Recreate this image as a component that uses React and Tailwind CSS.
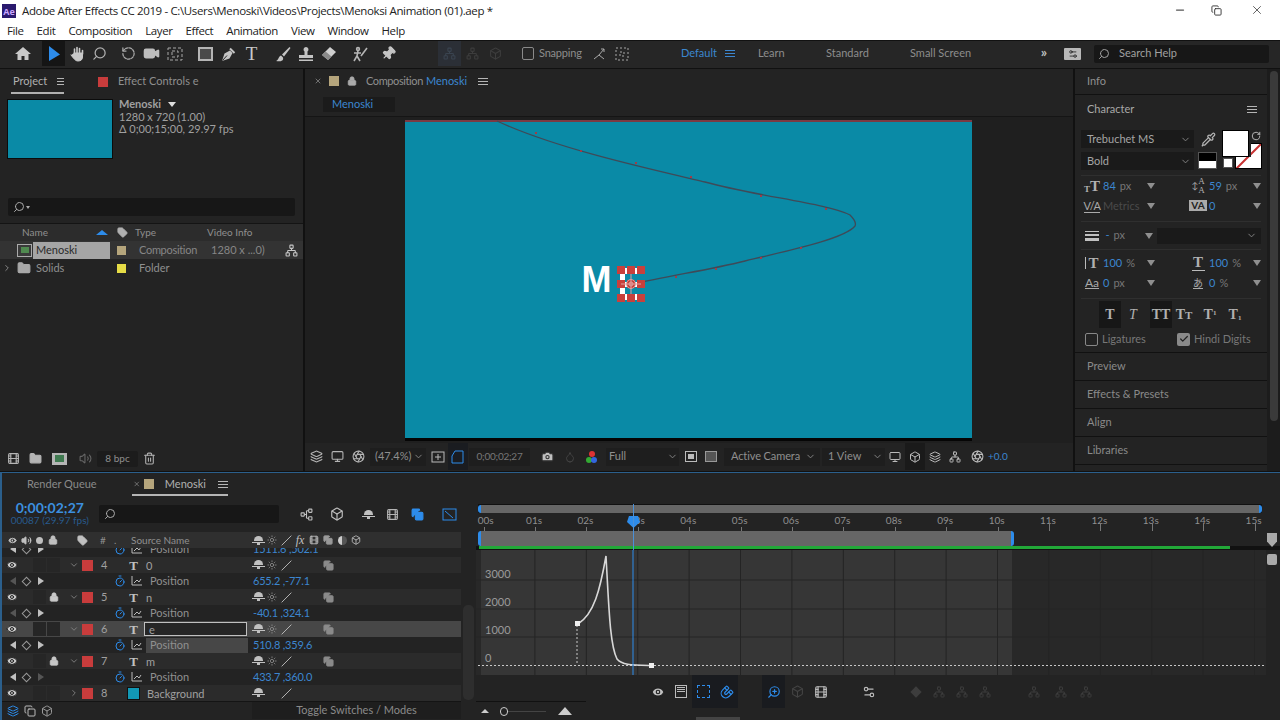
import React from "react";
import {
  Search, RotateCcw, Video, Pin, Eye, Volume2, Lock, Tag, Trash2,
  Folder, ChevronDown, ChevronRight, Monitor, Camera, Layers, Timer, Network, Check, X, Minus, Copy, Pipette, Settings2, Aperture, Box, Sun, Magnet, ZoomIn, Film, Slash, Droplet,
} from "lucide-react";

const Burger = ({ c = "bg-[#b5b5b5]" }) => (
  <span className="flex flex-col gap-[2px] w-[10px]">
    <span className={`h-px ${c}`} /><span className={`h-px ${c}`} /><span className={`h-px ${c}`} />
  </span>
);
const Slot = ({ w = "w-[23px]", children, className = "" }) => (
  <span className={`${w} h-full flex items-center justify-center shrink-0 ${className}`}>{children}</span>
);
const B = "#2d8ceb";
const Arrow = () => <span className="w-0 h-0 border-l-[4px] border-r-[4px] border-t-[6px] border-l-transparent border-r-transparent border-t-[#8f8f8f]" />;

const Serif = ({ children, className = "" }) => (
  <span className={`font-['Liberation_Serif',serif] font-bold text-[#b0b0b0] leading-none ${className}`}>{children}</span>
);

function Toolbar() {
  return (
    <div className="h-[28px] bg-[#262626] border-t border-[#111] flex items-center text-[11px] text-[#8d8d8d] shrink-0 pb-[2px]">
      <span className="w-[11px]" />
      <Slot>
        <svg width="16" height="15" viewBox="0 0 16 15" fill="#c8c8c8"><path d="M8 1 L16 8 H13.5 V14 H9.5 V10 H6.5 V14 H2.5 V8 H0 Z" /></svg>
      </Slot>
      <Slot className="ml-[8px] bg-[#151515]">
        <svg width="12" height="16" viewBox="0 0 12 16"><path d="M1 0 L12 8.5 L1 15 Z" fill={B} /></svg>
      </Slot>
      <Slot>
        <svg width="16" height="16" viewBox="0 0 16 16" fill="#c8c8c8" stroke="#c8c8c8" strokeLinecap="round" strokeWidth="1.6"><path d="M5.5 8 V3 M8 7 V1.5 M10.5 7 V2.5 M13.5 8 V4.5" fill="none" /><path d="M5 7 H13.5 V11 C13.5 13.5 12 15 9 15 C6.5 15 5 13 2 9" strokeWidth="1" /></svg>
      </Slot>
      <Slot><Search size={15} color="#b0b0b0" className="-scale-x-100" /></Slot>
      <Slot className="ml-[6px]"><RotateCcw size={15} color="#a8a8a8" strokeDasharray="4 2" /></Slot>
      <Slot><Video size={17} fill="#bdbdbd" color="#bdbdbd" /></Slot>
      <Slot>
        <svg width="16" height="14" viewBox="0 0 16 14" fill="none" stroke="#a8a8a8" strokeDasharray="3 2"><rect x="1" y="1" width="14" height="12" /><rect x="5" y="4" width="6" height="6" /></svg>
      </Slot>
      <Slot className="ml-[8px]"><span className="w-[15px] h-[14px] border-2 border-[#b5b5b5] bg-[#4a4a4a]" /></Slot>
      <Slot>
        <svg width="16" height="16" viewBox="0 0 16 16" fill="#c4c4c4"><path d="M1 15 L3.5 7.5 L9 4.5 L11.5 7 L8.5 12.5 Z" /><path d="M9 2.5 L13.5 7" stroke="#c4c4c4" strokeWidth="2" /><path d="M1.5 14.5 L6 9.5" stroke="#262626" /></svg>
      </Slot>
      <Slot><Serif className="text-[19px] font-normal text-[#c8c8c8]">T</Serif></Slot>
      <Slot className="ml-[8px]">
        <svg width="16" height="16" viewBox="0 0 16 16" fill="#c4c4c4"><path d="M14.5 1 L7 8.5 L9 10.5 L15.5 2 Z" /><path d="M6 9.5 C3 10.5 4 14 1 15 C5 16 9 15 8 11.5 Z" /></svg>
      </Slot>
      <Slot>
        <svg width="16" height="16" viewBox="0 0 16 16" fill="#c4c4c4"><path d="M8 1 A2.5 2.5 0 0 1 9.5 5.5 V9 H15 V12 H1 V9 H6.5 V5.5 A2.5 2.5 0 0 1 8 1 Z M1 13.5 H15 V15 H1 Z" /></svg>
      </Slot>
      <Slot>
        <svg width="17" height="15" viewBox="0 0 17 15" fill="#cfcfcf"><path d="M10 1 L16 6 L8 14 L2 9 Z" /><path d="M2 9 L5.5 5.5 L11.5 10.5 L8 14 Z" fill="#8a8a8a" /></svg>
      </Slot>
      <Slot className="ml-[8px]">
        <svg width="16" height="16" viewBox="0 0 16 16" fill="none" stroke="#b5b5b5" strokeWidth="1.6"><circle cx="6" cy="3" r="1.4" /><path d="M6 5 L5 10 L2 15 M5 10 L8 15 M2 7 L9 7 M15 2 L9 10" /></svg>
      </Slot>
      <Slot className="ml-[6px]"><Pin size={15} fill="#c4c4c4" color="#c4c4c4" className="rotate-45" /></Slot>
      <Slot className="ml-[38px] bg-[#2b2f36]"><Network size={13} color="#3a4450" /></Slot>
      <Slot><Network size={13} color="#3d3d3d" /></Slot>
      <Slot><Box size={13} color="#3d3d3d" /></Slot>
      <span className="ml-[15px] w-[12px] h-[13px] border border-[#8a8a8a] rounded-[2px] shrink-0" />
      <span className="ml-[5px] w-[43px] shrink-0 whitespace-nowrap tracking-[-0.2px]">Snapping</span>
      <Slot className="ml-[5px]">
        <svg width="14" height="14" viewBox="0 0 14 14" fill="none" stroke="#a8a8a8"><path d="M2 12 L7 8 L12 12 M7 8 L12 2 M9 2 L12 2 L12 5" /></svg>
      </Slot>
      <Slot>
        <svg width="14" height="14" viewBox="0 0 14 14" fill="none" stroke="#a8a8a8" strokeDasharray="2 2"><rect x="1" y="1" width="12" height="12" /><rect x="5" y="5" width="4" height="4" /></svg>
      </Slot>
      <span className="ml-[48px] w-[44px] text-[#3c86cf] shrink-0">Default</span>
      <span className="w-[33px] shrink-0"><Burger c="bg-[#3c86cf]" /></span>
      <span className="w-[68px] shrink-0">Learn</span>
      <span className="w-[84px] shrink-0">Standard</span>
      <span className="w-[120px] shrink-0">Small Screen</span>
      <Slot w="w-[28px]"><span className="text-[14px] text-[#c0c0c0] font-bold leading-none mb-[4px]">»</span></Slot>
      <Slot w="w-[29px]"><span className="w-[17px] h-[12px] bg-[#b8b8b8] rounded-[1px] flex items-center justify-center"><Settings2 size={10} color="#222" /></span></Slot>
      <span className="ml-[7px] w-[175px] h-[18px] bg-[#171717] rounded-[2px] flex items-center pl-[4px] text-[#a0a0a0] shrink-0">
        <Search size={12} color="#a0a0a0" className="-scale-x-100" />
        <span className="ml-[9px]">Search Help</span>
      </span>
    </div>
  );
}

function ProjectPanel() {
  return (
    <div className="w-[303px] bg-[#232323] flex flex-col text-[11px] text-[#8f8f8f] shrink-0">
      <div className="h-[25px] flex items-end shrink-0 pl-[11px]">
        <div className="w-[53px] h-[23px] border-b-2 border-[#b0b0b0] flex items-center pl-[2px] gap-[10px] text-[#b0b0b0]">
          <span>Project</span><Burger />
        </div>
        <span className="ml-[34px] mb-[7px] w-[10px] h-[10px] bg-[#c83c3c]" />
        <span className="ml-[10px] mb-[5px] whitespace-nowrap">Effect Controls e</span>
      </div>
      <div className="flex pl-[7px] mt-[5px] h-[62px]">
        <span className="w-[106px] h-[60px] bg-[#0a8aa6] border border-[#0c0c0c]" />
        <div className="ml-[6px] leading-[12.5px] mt-[-1px] text-[#a0a0a0]">
          <div className="font-bold flex items-center gap-[7px]">Menoski <span className="w-0 h-0 border-l-[4px] border-r-[4px] border-t-[5px] border-l-transparent border-r-transparent border-t-[#ddd]" /></div>
          <div>1280 x 720 (1.00)</div>
          <div>Δ 0;00;15;00, 29.97 fps</div>
        </div>
      </div>
      <div className="mx-[8px] mt-[37px] h-[18px] bg-[#171717] rounded-[2px] flex items-center pl-[5px] gap-[1px]">
        <Search size={12} color="#aaa" className="-scale-x-100" /><span className="w-0 h-0 border-l-[2px] border-r-[2px] border-t-[3px] border-l-transparent border-r-transparent border-t-[#aaa]" />
      </div>
      <div className="mt-[7px] h-[18px] bg-[#2c2c2c] border-t border-[#141414] flex items-center text-[10px] pl-[22px] relative">
        <span className="w-[74px]">Name</span>
        <span className="w-0 h-0 border-l-[6px] border-r-[6px] border-b-[5px] border-l-transparent border-r-transparent border-b-[#2d8ceb]" />
        <Tag size={11} fill="#b0b0b0" color="#b0b0b0" className="ml-[9px]" />
        <span className="ml-[7px] w-[72px]">Type</span>
        <span>Video Info</span>
      </div>
      <div className="h-[18px] bg-[#333] flex items-center relative">
        <span className="ml-[17px] w-[15px] h-[13px] border border-[#aaa] bg-[#3a3a3a] flex items-center justify-center"><span className="w-[8px] h-[6px] bg-[#508a50]" /></span>
        <span className="ml-[1px] w-[77px] h-[17px] bg-[#a5a5a5] flex items-center pl-[3px] text-[#2a2a2a]">Menoski</span>
        <span className="ml-[7px] w-[9px] h-[9px] bg-[#b5a57c]" />
        <span className="ml-[13px] w-[72px] text-[#868686] tracking-[-0.3px]">Composition</span>
        <span className="text-[#868686]">1280 x ...0)</span>
        <Network size={13} color="#c8c8c8" className="absolute right-[5px]" />
      </div>
      <div className="h-[18px] flex items-center">
        <ChevronRight size={10} color="#999" className="ml-[2px]" />
        <Folder size={14} fill="#a8a8a8" color="#a8a8a8" className="ml-[5px]" />
        <span className="ml-[2px] w-[77px] pl-[3px]">Solids</span>
        <span className="ml-[7px] w-[9px] h-[9px] bg-[#e6dc46]" />
        <span className="ml-[13px]">Folder</span>
      </div>
      <div className="mt-auto h-[19px] mb-[3px] flex items-center pl-[2px]">
        <Slot w="w-[22px]"><Film size={13} color="#b5b5b5" /></Slot>
        <Slot w="w-[22px]"><Folder size={13} fill="#b5b5b5" color="#b5b5b5" /></Slot>
        <Slot w="w-[26px]"><span className="w-[15px] h-[12px] bg-[#b5b5b5] flex items-center justify-center"><span className="w-[9px] h-[7px] bg-[#3f7a50]" /></span></Slot>
        <Slot w="w-[26px]"><Volume2 size={13} color="#666" /></Slot>
        <span className="w-[41px] h-[16px] bg-[#1c1c1c] rounded-[2px] text-[10px] flex items-center justify-center ml-[-1px]">8 bpc</span>
        <Slot w="w-[22px]" ><Trash2 size={13} color="#b0b0b0" /></Slot>
      </div>
    </div>
  );
}

function Handles() {
  const cells = [0, 1, 2, 3, 4, 5, 6, 7, 8];
  return (
    <div className="absolute left-[212px] top-[144px] w-[29px] h-[36px] grid grid-cols-3 grid-rows-3 gap-x-[2px] gap-y-[6px]">
      {cells.map((i) => (
        <span key={i} className="bg-[#c8403c]" />
      ))}
    </div>
  );
}

function Viewer() {
  return (
    <div className="w-[768px] mx-[2px] bg-[#232323] flex flex-col shrink-0 text-[11px] text-[#8f8f8f]">
      <div className="h-[26px] flex items-center pl-[9px] pb-[2px] shrink-0">
        <X size={8} color="#999" />
        <span className="ml-[7px] w-[10px] h-[10px] bg-[#b5a57c]" />
        <Lock size={10} color="#aaa" fill="#aaa" className="ml-[8px]" />
        <span className="ml-[9px] tracking-[-0.4px]">Composition</span>
        <span className="ml-[3px] text-[#3c86cf]">Menoski</span>
        <span className="ml-[11px]"><Burger /></span>
      </div>
      <div className="h-[22px] flex items-start shrink-0 border-b border-[#151515]">
        <span className="ml-[18px] mt-[2px] w-[72px] h-[15px] bg-[#1b1b1b] flex items-center pl-[9px] text-[#3c86cf]">Menoski</span>
      </div>
      <div className="flex-1 bg-[#1f1f1f] flex justify-center pt-[3px] min-h-0 pr-[2px]">
        <div className="w-[567px] h-[321px] bg-[#0a8aa6] border-t-2 border-t-[#7a3a44] border-b-[3px] border-b-[#050505] relative">
          <svg className="absolute left-0 top-[-2px]" width="567" height="319" viewBox="0 0 567 319" fill="none">
            <path d="M92 1 C150 28 240 48 300 62 C350 76 425 84 445 95 Q452 102 450 106 C440 118 395 128 340 141 C300 151 260 156 225 165" stroke="#3f4a58" strokeWidth="1.3" />
            {[[130,12],[175,30],[230,42],[285,56],[355,75],[420,88],[395,127],[355,137],[310,148],[270,156]].map(([x, y], i) => (
              <rect key={i} x={x} y={y} width="2" height="2" fill="#a03c48" />
            ))}
          </svg>
          <span className="absolute left-[177px] top-[136px] text-[36px] leading-[44px] font-bold text-white font-['Liberation_Sans',sans-serif]">M</span>
          <span className="absolute left-[215px] top-[146px] w-[22px] h-[32px] border-y-[6px] border-l-[5px] border-white flex items-center"><span className="w-full h-[5px] bg-white" /></span>
          <Handles />
          <svg className="absolute left-[216px] top-[152px]" width="20" height="20" viewBox="0 0 20 20" fill="none" stroke="#e0a0a0"><circle cx="10" cy="10" r="4.5" /><circle cx="10" cy="10" r="2" /><path d="M0 10 H20 M10 0 V20" /></svg>
        </div>
      </div>
      <div className="h-[28px] pb-[1px] flex items-center bg-[#232323] shrink-0 text-[#8f8f8f]">
        <span className="w-[1px]" />
        <Slot w="w-[21px]"><Layers size={13} color="#b5b5b5" /></Slot>
        <Slot w="w-[20px]"><Monitor size={13} color="#b5b5b5" /></Slot>
        <Slot w="w-[22px]"><Aperture size={13} color="#b5b5b5" /></Slot>
        <span className="ml-[1px] w-[56px] h-[18px] bg-[#1e1e1e] flex items-center pl-[5px] justify-between pr-[2px]">(47.4%)<ChevronDown size={11} color="#888" /></span>
        <Slot w="w-[20px]" className="ml-[2px]">
          <svg width="14" height="14" viewBox="0 0 14 14" fill="none" stroke="#bbb"><rect x="1" y="2" width="12" height="10" /><path d="M7 4 V10 M4 7 H10" /></svg>
        </Slot>
        <Slot w="w-[20px]" className="bg-[#1a1c20]">
          <svg width="14" height="14" viewBox="0 0 14 14" fill="none" stroke={B}><path d="M4 1 H12 V13 H1 V6 Z" /></svg>
        </Slot>
        <span className="ml-[1px] w-[61px] h-[18px] bg-[#1e1e1e] flex items-center justify-center text-[10px] tracking-tight text-[#777]">0;00;02;27</span>
        <Slot w="w-[34px]"><Camera size={13} fill="#c0c0c0" color="#333" /></Slot>
        <Slot w="w-[12px]"><Droplet size={12} color="#444" /></Slot>
        <Slot w="w-[30px]">
          <span className="relative w-[11px] h-[12px]">
            <span className="absolute left-[3px] top-0 w-[6px] h-[6px] rounded-full bg-[#d33]" />
            <span className="absolute left-0 bottom-0 w-[6px] h-[6px] rounded-full bg-[#3a3]" />
            <span className="absolute right-0 bottom-0 w-[6px] h-[6px] rounded-full bg-[#36d]" />
          </span>
        </Slot>
        <span className="w-[73px] h-[18px] bg-[#1e1e1e] flex items-center justify-between pl-[3px] pr-[1px]">Full<ChevronDown size={11} color="#888" /></span>
        <Slot w="w-[20px]" className="ml-[2px]"><span className="w-[12px] h-[11px] border border-[#bbb] flex items-center justify-center"><span className="w-[6px] h-[5px] bg-[#bbb]" /></span></Slot>
        <Slot w="w-[20px]"><span className="w-[12px] h-[11px] border border-[#999] bg-[#555]" /></Slot>
        <span className="ml-[3px] w-[96px] h-[18px] bg-[#1e1e1e] flex items-center justify-between pl-[7px] pr-[4px] whitespace-nowrap tracking-[-0.1px]">Active Camera<ChevronDown size={11} color="#888" /></span>
        <span className="ml-[2px] w-[63px] h-[18px] bg-[#1e1e1e] flex items-center justify-between pl-[6px] pr-[2px]">1 View<ChevronDown size={11} color="#888" /></span>
        <Slot w="w-[20px]"><Monitor size={12} color="#bbb" /></Slot>
        <Slot w="w-[20px]" className="bg-[#1a1a1a]"><Box size={12} color="#bbb" /></Slot>
        <Slot w="w-[20px]"><Layers size={12} color="#bbb" /></Slot>
        <Slot w="w-[20px]"><Network size={12} color="#bbb" /></Slot>
        <Slot w="w-[22px]" className="ml-[1px]"><Aperture size={13} color="#bbb" /></Slot>
        <span className="text-[#3c86cf] text-[10px]">+0.0</span>
      </div>
    </div>
  );
}

const Val = ({ icon, v, dim, unit, narrow }) => (
  <div className={`${narrow ? "w-[105px]" : "w-[106px]"} flex items-center h-full shrink-0`}>
    <span className="w-[22px] flex justify-center items-end shrink-0">{icon}</span>
    {dim ? <span className="text-[#4a4a4a] w-[44px]">{dim}</span> : (
      <span className="w-[44px] flex gap-[4px]"><span className="text-[#3c86cf]">{v}</span><span className="text-[#777]">{unit}</span></span>
    )}
    <Arrow />
  </div>
);

function CharacterPanel() {
  const Drop = ({ t, w = "w-[113px]" }) => (
    <div className={`${w} h-[18px] bg-[#1a1a1a] flex items-center justify-between pl-[6px] pr-[3px] text-[#a5a5a5]`}>
      <span>{t}</span><ChevronDown size={11} color="#888" />
    </div>
  );
  const Line = () => <div className="h-px bg-[#2f2f2f]" />;
  return (
    <div className="flex-1 flex text-[11px] text-[#8f8f8f] min-w-0">
      <div className="w-[192px] flex flex-col gap-[1px] bg-[#111] shrink-0">
        <div className="h-[25px] bg-[#232323] flex items-center pl-[12px]">Info</div>
        <div className="h-[257px] bg-[#232323] px-[6px] flex flex-col">
          <div className="h-[28px] flex items-center justify-between pl-[6px] pr-[4px] text-[#a8a8a8]">Character<Burger /></div>
          <div className="h-[41px] mt-[7px] relative">
            <Drop t="Trebuchet MS" />
            <div className="mt-[4px]"><Drop t="Bold" /></div>
            <Pipette size={15} color="#b5b5b5" className="absolute left-[120px] top-[2px]" />
            <span className="absolute left-[117px] top-[22px] w-[19px] h-[17px] border border-[#555] bg-[linear-gradient(#000_50%,#fff_50%)]" />
            <span className="absolute left-[154px] top-[13px] w-[27px] h-[26px] border border-black bg-white overflow-hidden">
              <span className="absolute left-[-6px] top-[11px] w-[38px] h-[2px] bg-[#c83232] -rotate-45" />
            </span>
            <span className="absolute left-[154px] top-[13px] w-[16px] h-[14px] bg-[#222]" />
            <span className="absolute left-[142px] top-[28px] w-[10px] h-[10px] bg-white border border-[#555]" />
            <span className="absolute left-[141px] top-0 w-[27px] h-[27px] bg-white border border-black" />
            <RotateCcw size={10} color="#ccc" className="absolute left-[170px] top-[1px] -scale-x-100" />
          </div>
          <div className="mt-[4px]"><Line /></div>
          <div className="h-[20px] flex items-center">
            <Val icon={<><Serif className="text-[9px]">T</Serif><Serif className="text-[15px]">T</Serif></>} v="84" unit="px" />
            <Val narrow icon={<span className="flex items-center"><span className="text-[#aaa] text-[9px]">↕</span><span className="flex flex-col"><Serif className="text-[9px] font-normal">A</Serif><Serif className="text-[9px] font-normal">A</Serif></span></span>} v="59" unit="px" />
          </div>
          <div className="h-[20px] flex items-center">
            <Val icon={<span className="text-[#aaa] text-[11px] tracking-tighter leading-[12px] border-b border-[#aaa]">V/A</span>} dim="Metrics" />
            <Val narrow icon={<span className="bg-[#aaa] text-[#222] text-[10px] font-bold px-[2px] leading-[11px] border-b-2 border-[#232323]">VA</span>} v="0" />
          </div>
          <div className="mt-[5px]"><Line /></div>
          <div className="h-[27px] flex items-center">
            <span className="w-[22px] flex justify-center"><span className="w-[14px] flex flex-col gap-[2px]"><span className="h-px bg-[#c0c0c0]" /><span className="h-[2px] bg-[#c0c0c0]" /><span className="h-[3px] bg-[#c0c0c0]" /></span></span>
            <span className="w-[44px] flex gap-[4px]"><span className="text-[#3c86cf] ml-[3px]">-</span><span className="text-[#777]">px</span></span>
            <Arrow />
            <span className="ml-[4px] w-[106px] h-[16px] bg-[#1a1a1a] flex justify-end items-center pr-[4px]"><ChevronDown size={11} color="#888" /></span>
          </div>
          <Line />
          <div className="h-[20px] mt-[3px] flex items-center">
            <Val icon={<><span className="w-[3px] h-[12px] border-x-0 border-l border-[#bbb] mb-[2px]" /><Serif className="text-[15px]">T</Serif></>} v="100" unit="%" />
            <Val narrow icon={<span className="flex flex-col items-center"><Serif className="text-[15px]">T</Serif><span className="w-[13px] h-px bg-[#bbb]" /></span>} v="100" unit="%" />
          </div>
          <div className="h-[20px] flex items-center">
            <Val icon={<span className="text-[#aaa] text-[12px] underline">Aa</span>} v="0" unit="px" />
            <Val narrow icon={<span className="text-[#aaa] text-[10px] leading-[12px] underline font-['Noto_Sans_CJK_JP',sans-serif]">あ</span>} v="0" unit="%" />
          </div>
          <div className="mt-[5px]"><Line /></div>
          <div className="h-[27px] mt-[2px] flex items-center pl-[18px]">
            <Slot w="w-[22px]" className="bg-[#171717]"><Serif className="text-[14px] text-[#3c8fdf]">T</Serif></Slot>
            <Slot w="w-[24px]"><Serif className="text-[14px] italic font-normal">T</Serif></Slot>
            <Slot w="w-[22px]" className="ml-[5px] bg-[#171717]"><Serif className="text-[14px] text-[#3c8fdf]">TT</Serif></Slot>
            <Slot w="w-[24px]"><Serif className="text-[14px]">T<span className="text-[11px]">T</span></Serif></Slot>
            <Slot w="w-[28px]"><Serif className="text-[14px]">T<sup className="text-[7px]">1</sup></Serif></Slot>
            <Slot w="w-[22px]"><Serif className="text-[14px]">T<sub className="text-[7px]">1</sub></Serif></Slot>
          </div>
          <div className="h-[20px] mt-[1px] flex items-center pl-[4px] text-[#777]">
            <span className="w-[13px] h-[13px] border border-[#888] rounded-[2px]" />
            <span className="ml-[4px] w-[75px]">Ligatures</span>
            <span className="w-[13px] h-[13px] bg-[#8a8a8a] rounded-[2px] flex items-center justify-center"><Check size={10} color="#222" strokeWidth={3} /></span>
            <span className="ml-[4px]">Hindi Digits</span>
          </div>
        </div>
        {["Preview", "Effects & Presets", "Align", "Libraries"].map((t) => (
          <div key={t} className="h-[27px] bg-[#232323] flex items-center pl-[12px] text-[#8a8a8a]">{t}</div>
        ))}
        <div className="flex-1 bg-[#232323]" />
      </div>
      <div className="flex-1 bg-[#1c1c1c] flex justify-center pt-[2px]"><span className="w-[8px] h-[350px] bg-[#3a3a3a] rounded-[4px]" /></div>
    </div>
  );
}

function Shy() {
  return (
    <span className="w-[14px] flex flex-col items-center">
      <span className="w-[9px] h-[5px] rounded-t-full bg-[#c0c0c0]" />
      <span className="w-[13px] h-px mt-px bg-[#c0c0c0]" />
      <span className="w-[3px] h-[2px] bg-[#c0c0c0]" />
    </span>
  );
}

function Switches({ dimSun }) {
  return (
    <>
      <Shy />
      <span className="w-[14px] flex justify-center">{!dimSun && <Sun size={10} color="#8c8c8c" />}</span>
      <span className="w-[14px] flex justify-center"><Slash size={11} color="#c0c0c0" /></span>
    </>
  );
}

function LayerRow({ n, name, locked, selected, expanded = true, bgIcon, motion = true }) {
  return (
    <div className={`h-[16px] flex items-center text-[11px] text-[#a0a0a0] ${selected ? "bg-[#474747]" : "bg-[#2b2b2b]"}`}>
      <span className="w-[20px] flex justify-center"><Eye size={12} fill="#c8c8c8" color="#222" /></span>
      <span className="ml-[11px] w-[13px] h-[14px] bg-[#262626]" />
      <span className="ml-[1px] w-[13px] h-[14px] flex items-center justify-center">
        {locked ? <Lock size={10} fill="#c8c8c8" color="#c8c8c8" /> : <span className="w-full h-full bg-[#262626]" />}
      </span>
      <span className="ml-[8px] w-[12px] flex justify-center">
        {expanded ? <ChevronDown size={10} color="#888" /> : <ChevronRight size={10} color="#888" />}
      </span>
      <span className="ml-[2px] w-[11px] h-[11px] bg-[#c83c3c]" />
      <span className="ml-[8px] w-[25px]">{n}</span>
      <span className="w-[15px] flex justify-center">
        {bgIcon ? <span className="w-[13px] h-[13px] bg-[#1298b5] border border-[#111]" /> : <Serif className="text-[13px] text-[#c0c0c0]">T</Serif>}
      </span>
      <span className={`ml-[3px] ${bgIcon ? "pl-[3px]" : selected ? "pl-[4px]" : "pl-[2px]"} w-[103px] h-[14px] flex items-center leading-none ${selected ? "border border-[#c0c0c0] bg-[#262626]" : ""}`}>{name}</span>
      <span className="ml-[4px] flex w-[42px]"><Switches dimSun={bgIcon} /></span>
      <span className="ml-[28px] w-[14px] flex justify-center">{motion && <Copy size={11} fill="#8a8a8a" color="#8a8a8a" />}</span>
    </div>
  );
}

function PropRow({ val, selected, left = true, right = true }) {
  return (
    <div className="h-[16px] shrink-0 flex items-center text-[11px] text-[#909090] bg-[#232323]">
      <span className="w-[14px] flex justify-end"><span className={`w-0 h-0 border-y-[4px] border-r-[6px] border-y-transparent ${left ? "border-r-[#c0c0c0]" : "border-r-[#555]"}`} /></span>
      <span className="ml-[7px] w-[7px] h-[7px] rotate-45 border border-[#999]" />
      <span className={`ml-[8px] w-0 h-0 border-y-[4px] border-l-[6px] border-y-transparent ${right ? "border-l-[#c0c0c0]" : "border-l-[#555]"}`} />
      <span className="ml-[69px] w-[13px] flex justify-center"><Timer size={12} color={B} /></span>
      <span className="ml-[5px] w-[12px]">
        <svg width="11" height="10" viewBox="0 0 11 10" fill="none" stroke="#bbb"><path d="M1 0 V9 H11 M3 7 L6 4 L8 6 L10 3" /></svg>
      </span>
      <span className={`ml-[3px] pl-[4px] w-[102px] h-[15px] flex items-center ${selected ? "bg-[#474747]" : ""}`}>Position</span>
      <span className="ml-[5px] text-[#3c86cf] tracking-[-0.2px] whitespace-nowrap">{val}</span>
    </div>
  );
}

function TimelineLeft() {
  return (
    <div className="w-[459px] flex flex-col shrink-0">
      <div className="h-[23px] flex items-end text-[11px] shrink-0">
        <span className="ml-[25px] w-[105px] pb-[4px] text-[#8a8a8a]">Render Queue</span>
        <div className="w-[96px] h-[22px] border-b-2 border-[#b5b5b5] flex items-center pl-[1px] text-[#b0b0b0]">
          <X size={8} color="#999" />
          <span className="ml-[4px] w-[10px] h-[10px] bg-[#b5a57c]" />
          <span className="ml-[11px]">Menoski</span>
          <span className="ml-[12px]"><Burger /></span>
        </div>
      </div>
      <div className="h-[36px] flex items-center shrink-0">
        <div className="w-[94px] text-center leading-[13px] ml-[2px]">
          <div className="text-[14px] font-bold text-[#3c8fdf]">0;00;02;27</div>
          <div className="text-[10px] text-[#285a8c]">00087 (29.97 fps)</div>
        </div>
        <div className="ml-[3px] w-[185px] h-[18px] bg-[#171717] rounded-[2px] flex items-center pl-[5px]"><Search size={12} color="#aaa" className="-scale-x-100" /></div>
        <Slot w="w-[24px]" className="ml-[15px]"><Network size={13} color="#c0c0c0" className="-rotate-90" /></Slot>
        <Slot w="w-[24px]" className="ml-[7px]"><Box size={14} color="#c0c0c0" /></Slot>
        <Slot w="w-[24px]" className="ml-[7px]"><Shy /></Slot>
        <Slot w="w-[25px]"><Film size={13} color="#b5b5b5" /></Slot>
        <Slot w="w-[24px]"><Copy size={13} fill={B} color={B} /></Slot>
        <Slot w="w-[24px]" className="ml-[8px]">
          <svg width="15" height="14" viewBox="0 0 15 14" fill="none" stroke={B}><rect x="1" y="2" width="13" height="11" /><path d="M3 4 L11 11" /></svg>
        </Slot>
      </div>
      <div className="h-[16px] bg-[#2f2f2f] flex items-center text-[10px] text-[#8f8f8f] shrink-0">
        <span className="w-[4px]" />
        <span className="w-[13px] flex justify-center"><Eye size={11} fill="#c0c0c0" color="#222" /></span>
        <span className="w-[14px] flex justify-center"><Volume2 size={11} fill="#c0c0c0" color="#c0c0c0" /></span>
        <span className="w-[13px] flex justify-center"><span className="w-[7px] h-[7px] rounded-full bg-[#c0c0c0]" /></span>
        <span className="w-[14px] flex justify-center"><Lock size={10} fill="#c0c0c0" color="#c0c0c0" /></span>
        <span className="ml-[17px] w-[20px]"><Tag size={11} fill="#c0c0c0" color="#c0c0c0" /></span>
        <span className="ml-[3px] w-[14px]">#</span>
        <span className="w-[17px]">.</span>
        <span className="w-[117px] whitespace-nowrap">Source Name</span>
        <span className="flex ml-[3px] items-center">
          <Switches />
          <span className="w-[14px] flex justify-center italic font-['Liberation_Serif',serif] text-[12px] text-[#c0c0c0]">fx</span>
          <span className="w-[14px] flex justify-center"><Film size={10} color="#c0c0c0" /></span>
          <span className="w-[14px] flex justify-center"><Copy size={10} fill="#999" color="#999" /></span>
          <span className="w-[14px] flex justify-center"><span className="w-[9px] h-[9px] rounded-full bg-[linear-gradient(90deg,#ccc_50%,#555_50%)]" /></span>
          <span className="w-[14px] flex justify-center"><Box size={10} color="#c0c0c0" /></span>
        </span>
      </div>
      <div className="h-[9px] overflow-hidden flex flex-col justify-end shrink-0">
        <PropRow val="1511.6 ,502.1" />
      </div>
      <LayerRow n="4" name="0" />
      <PropRow val="655.2 ,-77.1" left={false} />
      <LayerRow n="5" name="n" locked />
      <PropRow val="-40.1 ,324.1" left={false} />
      <LayerRow n="6" name="e" selected />
      <PropRow val="510.8 ,359.6" selected />
      <LayerRow n="7" name="m" locked />
      <PropRow val="433.7 ,360.0" right={false} />
      <LayerRow n="8" name="Background" bgIcon expanded={false} motion={false} />
      <div className="h-[18px] border-t border-[#141414] flex items-center shrink-0">
        <Slot w="w-[17px]" className="ml-[2px]"><Layers size={12} color={B} /></Slot>
        <Slot w="w-[17px]"><Copy size={12} color="#bbb" /></Slot>
        <Slot w="w-[17px]"><Box size={12} color="#999" /></Slot>
        <span className="ml-[197px] w-[209px] h-[17px] bg-[#1e1e1e] flex items-center justify-center text-[11px] text-[#8a8a8a]">Toggle Switches / Modes</span>
      </div>
    </div>
  );
}

const seconds = ["00s", "01s", "02s", "03s", "04s", "05s", "06s", "07s", "08s", "09s", "10s", "11s", "12s", "13s", "14s", "15s"];

function GraphArea() {
  const xs = seconds.map((_, i) => 7.5 + i * 51.4);
  return (
    <div className="flex-1 flex flex-col min-w-0 relative">
      <div className="h-[9px] mt-[31px] bg-[#111] ml-[2px] mr-[18px] flex items-center shrink-0">
        <span className="flex-1 h-[8px] bg-[#666] border-x-[3px] border-[#2d8ceb] rounded-[3px]" />
      </div>
      <div className="h-[18px] relative text-[10px] text-[#8f8f8f] shrink-0 flex">
        {seconds.map((s, i) => (
          <span key={s} className="w-[51.4px] shrink-0 text-center relative left-[-19px] flex flex-col items-center">
            <span className={`leading-[14px] ${i === 0 ? "ml-[6px]" : ""}`}>{s}</span>
            <span className={`w-px bg-[#777] ${i > 10 ? "h-[9px] mt-[-4px] ml-[3px]" : "h-[4px] ml-[3px]"}`} />
          </span>
        ))}
      </div>
      <div className="h-[15px] flex items-center shrink-0">
        <span className="ml-[2px] w-[536px] h-[15px] bg-[#666] border-x-[3px] border-[#2d8ceb] rounded-[3px]" />
      </div>
      <div className="h-[4px] bg-[#111] flex shrink-0"><span className="ml-[3px] w-[751px] h-[3px] bg-[#22a838]" /></div>
      <svg width="804" height="125" viewBox="0 0 804 125" className="shrink-0" fill="none">
        <rect width="790" height="125" fill="#282828" />
        <rect x="5" y="0" width="531" height="125" fill="#363636" />
        {xs.slice(1).map((x, i) => <path key={i} d={`M${x} 0 V125`} stroke="#242424" />)}
        {[30, 59, 87].map((y) => <path key={y} d={`M0 ${y} H790`} stroke="#242424" />)}
        <text x="9" y="28" fill="#9a9a9a" fontSize="11" fontFamily="Lato">3000</text>
        <text x="9" y="56" fill="#9a9a9a" fontSize="11" fontFamily="Lato">2000</text>
        <text x="9" y="84" fill="#9a9a9a" fontSize="11" fontFamily="Lato">1000</text>
        <text x="9" y="112" fill="#9a9a9a" fontSize="11" fontFamily="Lato">0</text>
        <path d="M2 115.5 H790" stroke="#c8c8c8" strokeDasharray="2 2" />
        <path d="M101 75 V115" stroke="#c8c8c8" strokeDasharray="2 2" />
        <path d="M102 74 C118 64 124 40 130 6 C133 60 134 95 141 109 C146 115 155 115 175 115.5" stroke="#d8d8d8" strokeWidth="1.6" />
        <rect x="99" y="71" width="5" height="5" fill="#eee" />
        <rect x="173" y="113" width="5" height="5" fill="#eee" />
        <path d="M157 0 V125" stroke={B} />
      </svg>
      <div className="absolute left-[151px] top-[43px] w-[13px] h-[12px] bg-[#2d8ceb] [clip-path:polygon(15%_0,85%_0,100%_50%,50%_100%,0_50%)]" />
      <div className="absolute left-[157px] top-[31px] h-[46px] w-px bg-[#4a90d8]" />
      <div className="absolute right-[3px] top-[60px] w-[10px] h-[14px] bg-[#aaa] [clip-path:polygon(0_0,100%_0,100%_60%,50%_100%,0_60%)]" />
      <div className="absolute right-[3px] top-[81px] w-[10px] h-[11px] bg-[#aaa] rounded-[2px]" />
      <div className="h-[33px] flex items-center shrink-0">
        <Slot w="w-[23px]" className="ml-[170px] h-[24px]"><Eye size={14} fill="#c0c0c0" color="#222" /></Slot>
        <Slot w="w-[23px]"><span className="w-[12px] h-[13px] border border-[#bbb] flex flex-col gap-[1px] p-[1px]"><span className="h-px bg-[#bbb]" /><span className="h-px bg-[#bbb]" /><span className="h-px bg-[#bbb]" /></span></Slot>
        <Slot w="w-[23px]" className="bg-[#191b1f]"><span className="w-[13px] h-[13px] border border-dashed border-[#2d8ceb]" /></Slot>
        <Slot w="w-[23px]" className="bg-[#191b1f]"><Magnet size={14} color={B} className="rotate-180" /></Slot>
        <Slot w="w-[23px]" className="ml-[24px] bg-[#191b1f]"><ZoomIn size={14} color={B} className="-scale-x-100" /></Slot>
        <Slot w="w-[24px]"><Box size={13} color="#444" /></Slot>
        <Slot w="w-[24px]"><Film size={14} color="#bbb" /></Slot>
        <Slot w="w-[23px]" className="ml-[24px]"><Settings2 size={14} color="#bbb" /></Slot>
        <Slot w="w-[23px]" className="ml-[24px]"><span className="w-[8px] h-[8px] rotate-45 bg-[#3d3d3d]" /></Slot>
        <Slot w="w-[23px]"><Network size={12} color="#3d3d3d" /></Slot>
        <Slot w="w-[23px]"><Network size={12} color="#3d3d3d" /></Slot>
        <Slot w="w-[23px]"><Network size={12} color="#3d3d3d" /></Slot>
        <Slot w="w-[27px]" className="ml-[24px]"><Network size={12} color="#3d3d3d" /></Slot>
        <Slot w="w-[27px]"><Network size={12} color="#3d3d3d" /></Slot>
        <Slot w="w-[23px]"><Network size={12} color="#3d3d3d" /></Slot>
      </div>
      <div className="absolute left-0 bottom-0 h-[19px] w-[110px] border-t border-[#111] flex items-center">
        <span className="ml-[5px] w-0 h-0 border-x-[4px] border-b-[4px] border-x-transparent border-b-[#ccc]" />
        <span className="ml-[11px] w-[8px] h-[9px] rounded-full border border-[#ccc]" />
        <span className="w-[38px] h-[1px] bg-[#444]" />
        <span className="ml-[12px] w-0 h-0 border-x-[7px] border-b-[8px] border-x-transparent border-b-[#ccc]" />
      </div>
      <div className="absolute left-[220px] bottom-0 w-[44px] h-[3px] bg-[#444]" />
    </div>
  );
}

export default function App() {
  return (
    <div className="w-[1280px] h-[720px] overflow-hidden flex flex-col bg-[#111] font-['Lato','Open_Sans',sans-serif]">
      <div className="h-[20px] bg-white flex items-center shrink-0 font-['Open_Sans',sans-serif] text-[11.5px] text-[#222]">
        <span className="ml-[2px] mt-[2px] w-[14px] h-[14px] bg-[#2a1a6e] text-[#c9a6ff] text-[9px] font-bold flex items-center justify-center leading-none">Ae</span>
        <span className="ml-[6px] mt-[2px] whitespace-nowrap tracking-[-0.36px]">Adobe After Effects CC 2019 - C:\Users\Menoski\Videos\Projects\Menoksi Animation (01).aep *</span>
        <span className="ml-auto flex items-center">
          <Slot w="w-[36px]" className="h-[20px]"><Minus size={12} color="#555" strokeWidth={2.5} /></Slot>
          <Slot w="w-[37px]" className="h-[20px]"><Copy size={11} color="#333" /></Slot>
          <Slot w="w-[44px]" className="h-[20px]"><X size={14} color="#333" strokeWidth={1.3} /></Slot>
          <span className="w-[1px]" />
        </span>
      </div>
      <div className="h-[20px] bg-white flex items-center gap-[13px] pl-[7px] pt-[1px] shrink-0 font-['Open_Sans',sans-serif] text-[11.5px] text-[#222] tracking-[-0.4px]">
        {["File", "Edit", "Composition", "Layer", "Effect", "Animation", "View", "Window", "Help"].map((m) => <span key={m}>{m}</span>)}
      </div>
      <Toolbar />
      <div className="h-[404px] flex shrink-0 pt-[1px] pb-[1px]">
        <ProjectPanel />
        <Viewer />
        <CharacterPanel />
      </div>
      <div className="flex-1 min-h-0 bg-[#232323] border-t border-l-2 border-[#2b5f8c] flex">
        <TimelineLeft />
        <div className="w-[15px] shrink-0 flex justify-center items-end pb-[20px]"><span className="w-[11px] h-[95px] bg-[#2e2e2e] rounded-[5px]" /></div>
        <GraphArea />
      </div>
    </div>
  );
}
